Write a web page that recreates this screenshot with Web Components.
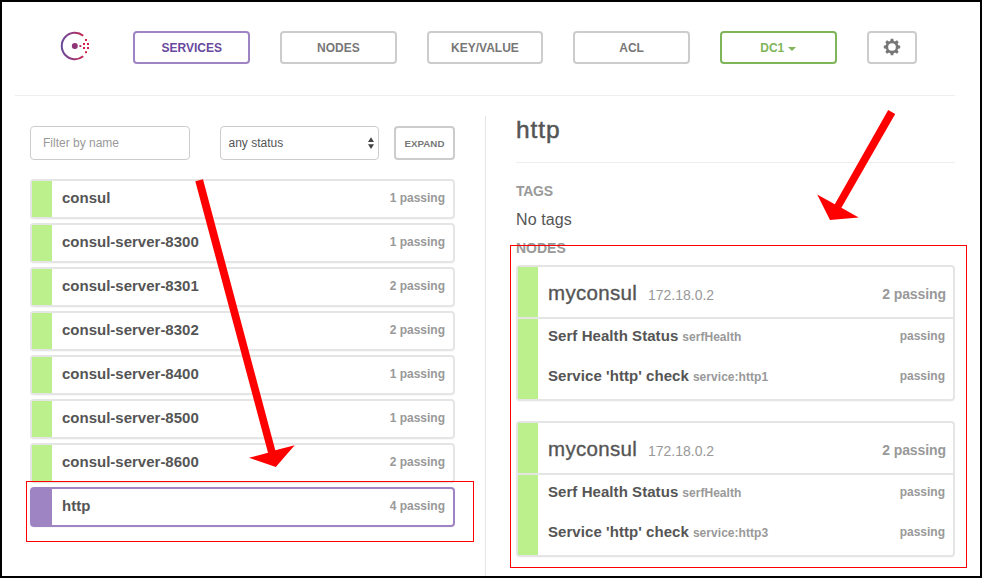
<!DOCTYPE html>
<html lang="en">
<head>
<meta charset="utf-8">
<title>Consul</title>
<style>
html,body{margin:0;height:100%}
body{font-family:"Liberation Sans",Arial,sans-serif;color:#555;background:#fff;overflow:hidden}
</style>
</head>
<body>
<consul-app></consul-app>
<script>
const define = (name, html) => customElements.define(name, class extends HTMLElement {
  constructor() {
    super();
    const t = document.createElement('template');
    t.innerHTML = html;
    this.attachShadow({mode: 'open'}).append(t.content.cloneNode(true));
  }
});

define('consul-logo', `
<style>:host{display:block;width:32px;height:32px}svg{display:block}</style>
<svg width="32" height="32" viewBox="59 30 32 32">
  <defs><linearGradient id="g" gradientUnits="userSpaceOnUse" x1="61" y1="0" x2="85" y2="0">
    <stop offset="0" stop-color="#694a9c"/><stop offset=".5" stop-color="#95397b"/><stop offset="1" stop-color="#ca2147"/></linearGradient></defs>
  <path d="M83.2 35.7A13.2 13.2 0 1 0 83.2 56.3" fill="none" stroke="url(#g)" stroke-width="2"/>
  <circle cx="74.8" cy="46" r="3" fill="#8f3577"/>
  <rect x="79.4" y="45.1" width="1.9" height="1.9" fill="#b52a5a"/>
  <g fill="#d61f44"><rect x="83" y="43" width="2" height="2"/><rect x="87" y="43" width="2" height="2"/>
  <rect x="83" y="47" width="2" height="2"/><rect x="87" y="47" width="2" height="2"/>
  <rect x="85" y="39" width="2" height="2"/><rect x="85" y="51.2" width="2" height="2"/></g>
</svg>`);

define('nav-button', `
<style>
:host{display:flex;box-sizing:border-box;width:116.67px;height:33px;padding-top:1px;border:2px solid #ccc;border-radius:4px;align-items:center;justify-content:center;font:bold 12px/15px "Liberation Sans",Arial,sans-serif;color:#777}
:host([kind=active]){border-color:#9f84c4;color:#694a9c}
:host([kind=dc]){border-color:#7fb559;color:#7fb559}
:host([kind=icon]){width:50px;padding:0}
</style><slot></slot>`);

define('caret-down', `
<style>:host{display:block;margin:2px 0 0 4px;border:4px solid transparent;border-top-color:currentColor;border-bottom:0}</style>`);

define('gear-icon', `
<style>:host{display:block;width:18px;height:18px;margin-top:-1px}svg{display:block}</style>
<svg width="18" height="18" viewBox="-9 -9 18 18" fill="#777">
  <circle r="5.1" fill="none" stroke="#777" stroke-width="2.5"/>
  <g id="a"><path d="M-1.9-5.6L-1.2-8.2H1.2L1.9-5.6ZM-1.9 5.6L-1.2 8.2H1.2L1.9 5.6ZM-5.6-1.9L-8.2-1.2V1.2L-5.6 1.9ZM5.6-1.9L8.2-1.2V1.2L5.6 1.9Z"/></g>
  <use href="#a" transform="rotate(45)"/>
</svg>`);

define('top-nav', `
<style>
:host{display:flex;box-sizing:border-box;height:94px;margin:0 25px 0 13px;padding:29px 0 0 44px;border-bottom:1px solid #eee;gap:30px;align-items:flex-start}
consul-logo{margin:-1px 12.33px 0 0}
</style>
<consul-logo></consul-logo>
<nav-button kind="active">SERVICES</nav-button>
<nav-button>NODES</nav-button>
<nav-button>KEY/VALUE</nav-button>
<nav-button>ACL</nav-button>
<nav-button kind="dc">DC1<caret-down></caret-down></nav-button>
<nav-button kind="icon"><gear-icon></gear-icon></nav-button>`);

define('filter-bar', `
<style>
:host{display:flex;height:34px}
.field{box-sizing:border-box;border:1px solid #ccc;border-radius:4px;font-size:12px;line-height:32px;height:34px}
.name{width:160px;padding-left:12px;color:#999;margin-right:30px}
.status{width:159px;padding:0 4px 0 7.5px;display:flex;justify-content:space-between;align-items:center;margin-right:15px}
.expand{box-sizing:border-box;width:61px;border:2px solid #ccc;border-radius:4px;font-weight:bold;font-size:9.75px;line-height:31px;text-align:center;color:#777}
</style>
<div class="field name">Filter by name</div>
<div class="field status"><span>any status</span><svg width="6" height="12" viewBox="0 0 6 12" fill="#444"><path d="M0 5L3 .2 6 5ZM0 7.2H6L3 12Z"/></svg></div>
<div class="expand">EXPAND</div>`);

define('service-row', `
<style>
:host{display:flex;box-sizing:border-box;height:40px;border:2px solid #e5e5e5;border-radius:4px;box-shadow:0 1px 1px rgba(0,0,0,.03);background:#fff;font-weight:bold;font-size:15px;line-height:34px}
i{width:20px;background:#bcf08d;flex:none;margin-right:10px}
span{flex:1}
.count{flex:none;color:#999;font-size:12px;margin-right:8px}
:host([selected]){border-color:#9f84c4}
:host([selected]) i{background:#9f84c4}
</style><i></i><span><slot></slot></span><span class="count"><slot name="count"></slot></span>`);

define('service-list', `
<style>:host{display:flex;flex-direction:column;gap:4px}</style>
<service-row>consul<b slot="count">1 passing</b></service-row>
<service-row>consul-server-8300<b slot="count">1 passing</b></service-row>
<service-row>consul-server-8301<b slot="count">2 passing</b></service-row>
<service-row>consul-server-8302<b slot="count">2 passing</b></service-row>
<service-row>consul-server-8400<b slot="count">1 passing</b></service-row>
<service-row>consul-server-8500<b slot="count">1 passing</b></service-row>
<service-row>consul-server-8600<b slot="count">2 passing</b></service-row>
<service-row selected>http<b slot="count">4 passing</b></service-row>`);

define('check-row', `
<style>
:host{display:flex;align-items:flex-start;box-sizing:border-box;height:40px;padding:0 8px 0 10px;border-left:20px solid #bcf08d;font-weight:bold;font-size:15px;line-height:34px}
.label{letter-spacing:.06px}
small,.state{font-size:12px;color:#999}
small{margin-left:4px;line-height:36px;letter-spacing:.04px}
.state{margin-left:auto}
</style><span class="label"><slot></slot></span><small><slot name="id"></slot></small><span class="state">passing</span>`);

define('node-card', `
<style>
:host{display:block;box-sizing:border-box;height:136px;border:2px solid #e5e5e5;border-radius:4px;box-shadow:0 1px 1px rgba(0,0,0,.03)}
header{display:flex;height:50px;border-bottom:2px solid #e5e5e5}
i{width:20px;background:#bcf08d;margin-right:10px}
.title{font-size:20.5px;line-height:24px;padding-top:14px;letter-spacing:.3px;-webkit-text-stroke:.35px #555}
.ip{font-size:14px;line-height:20px;padding-top:18px;margin-left:11px;color:#999}
.count{font-size:14px;line-height:20px;font-weight:bold;padding-top:17px;margin:0 7px 0 auto;color:#999;letter-spacing:-.08px}
</style>
<header><i></i><span class="title">myconsul</span><span class="ip">172.18.0.2</span><span class="count">2 passing</span></header>
<check-row>Serf Health Status<span slot="id">serfHealth</span></check-row>
<check-row>Service 'http' check<span slot="id"><slot></slot></span></check-row>`);

define('service-detail', `
<style>
:host{display:block}
h1{margin:0;height:46px;font-weight:normal;font-size:24.5px;line-height:27px;letter-spacing:.9px;-webkit-text-stroke:.5px #555;border-bottom:1px solid #eee}
h5{margin:0;font-size:14px;line-height:16px;color:#999}
.tags{margin-top:20px;letter-spacing:-.25px}
p{margin:10px 0;font-size:16px;line-height:21px;letter-spacing:.1px}
.cards{margin-top:9px;display:grid;gap:20px}
</style>
<h1>http</h1>
<h5 class="tags">TAGS</h5>
<p>No tags</p>
<h5>NODES</h5>
<div class="cards"><node-card>service:http1</node-card><node-card>service:http3</node-card></div>`);

define('annotation-layer', `
<style>:host{position:absolute;inset:0;pointer-events:none}svg{display:block}</style>
<svg width="982" height="578" fill="#f00">
  <g fill="none" stroke="#f00"><rect x="26.5" y="481.5" width="447" height="60"/><rect x="510.5" y="245.5" width="456" height="322"/></g>
  <path d="M195.3 181.3L203 179.3 275.3 450.3 294.7 445.3 275.8 467 249 457.8 268 452.7Z"/>
  <path d="M888.2 110L895.2 114 841.4 207.8 858.7 217.6 830 220 817.2 194.5 834.8 204.3Z"/>
</svg>`);

define('consul-app', `
<style>
:host{display:block;position:relative;box-sizing:border-box;width:982px;height:578px;border:2px solid #000;background:#fff;overflow:hidden}
main{display:flex;padding:20px 0 0 28px}
.left{width:425px;padding:10px 30px 0 0;height:450px;border-right:1px solid #e5e5e5}
service-list{margin-top:19px}
service-detail{width:439px;margin-left:30px}
annotation-layer{margin:-2px}
</style>
<top-nav></top-nav>
<main><div class="left"><filter-bar></filter-bar><service-list></service-list></div><service-detail></service-detail></main>
<annotation-layer></annotation-layer>`);
</script>
</body>
</html>
